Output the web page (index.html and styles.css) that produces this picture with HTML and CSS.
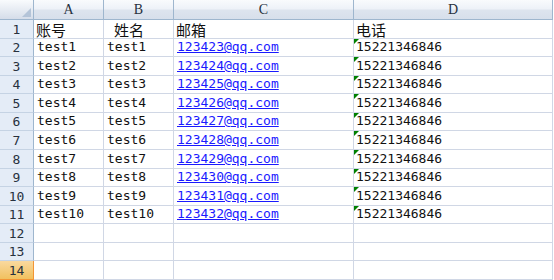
FILE: index.html
```html
<!DOCTYPE html>
<html>
<head>
<meta charset="utf-8">
<link rel="stylesheet" href="styles.css">
</head>
<body>
<div class="sheet">
  <div class="corner"><span class="corner-tri"></span></div>
  <div class="colhead">A</div>
  <div class="colhead">B</div>
  <div class="colhead">C</div>
  <div class="colhead">D</div>

  <div class="rowhead">1</div>
  <div class="cell cjk">账号</div>
  <div class="cell cjk"><span class="indent">姓名</span></div>
  <div class="cell cjk">邮箱</div>
  <div class="cell cjk">电话</div>

  <div class="rowhead">2</div><div class="cell">test1</div><div class="cell">test1</div><div class="cell"><a class="link">123423@qq.com</a></div><div class="cell num"><span class="flag"></span>15221346846</div>
  <div class="rowhead">3</div><div class="cell">test2</div><div class="cell">test2</div><div class="cell"><a class="link">123424@qq.com</a></div><div class="cell num"><span class="flag"></span>15221346846</div>
  <div class="rowhead">4</div><div class="cell">test3</div><div class="cell">test3</div><div class="cell"><a class="link">123425@qq.com</a></div><div class="cell num"><span class="flag"></span>15221346846</div>
  <div class="rowhead">5</div><div class="cell">test4</div><div class="cell">test4</div><div class="cell"><a class="link">123426@qq.com</a></div><div class="cell num"><span class="flag"></span>15221346846</div>
  <div class="rowhead">6</div><div class="cell">test5</div><div class="cell">test5</div><div class="cell"><a class="link">123427@qq.com</a></div><div class="cell num"><span class="flag"></span>15221346846</div>
  <div class="rowhead">7</div><div class="cell">test6</div><div class="cell">test6</div><div class="cell"><a class="link">123428@qq.com</a></div><div class="cell num"><span class="flag"></span>15221346846</div>
  <div class="rowhead">8</div><div class="cell">test7</div><div class="cell">test7</div><div class="cell"><a class="link">123429@qq.com</a></div><div class="cell num"><span class="flag"></span>15221346846</div>
  <div class="rowhead">9</div><div class="cell">test8</div><div class="cell">test8</div><div class="cell"><a class="link">123430@qq.com</a></div><div class="cell num"><span class="flag"></span>15221346846</div>
  <div class="rowhead">10</div><div class="cell">test9</div><div class="cell">test9</div><div class="cell"><a class="link">123431@qq.com</a></div><div class="cell num"><span class="flag"></span>15221346846</div>
  <div class="rowhead">11</div><div class="cell">test10</div><div class="cell">test10</div><div class="cell"><a class="link">123432@qq.com</a></div><div class="cell num"><span class="flag"></span>15221346846</div>
  <div class="rowhead">12</div><div class="cell"></div><div class="cell"></div><div class="cell"></div><div class="cell"></div>
  <div class="rowhead">13</div><div class="cell"></div><div class="cell"></div><div class="cell"></div><div class="cell"></div>
  <div class="rowhead active">14</div><div class="cell"></div><div class="cell"></div><div class="cell"></div><div class="cell"></div>
</div>
</body>
</html>
```

FILE: styles.css
```css
html, body {
  margin: 0;
  padding: 0;
  background: #ffffff;
  overflow: hidden;
}

.sheet {
  display: grid;
  grid-template-columns: 34px 70px 70px 180px 199px;
  grid-template-rows: 20px repeat(14, 18.57px);
  width: 553px;
  font-family: "DejaVu Sans Mono", "Liberation Mono", monospace;
  font-size: 13px;
  color: #111;
}

.corner {
  position: relative;
  box-sizing: border-box;
  background: linear-gradient(#f9fbfd, #d5dde9);
  border-right: 1px solid #9eb6ce;
  border-bottom: 1px solid #9eb6ce;
}

.corner-tri {
  position: absolute;
  right: 2px;
  bottom: 2px;
  width: 0;
  height: 0;
  border-left: 9px solid transparent;
  border-bottom: 9px solid #b4c4d8;
}

.colhead {
  box-sizing: border-box;
  background: linear-gradient(#f9fbfd 0%, #eef2f8 45%, #dde4ee 55%, #d7dfeb 100%);
  border-right: 1px solid #9eb6ce;
  border-bottom: 1px solid #9eb6ce;
  display: flex;
  align-items: center;
  justify-content: center;
  font-family: "Liberation Serif", serif;
  font-size: 14px;
  color: #27313e;
  padding-top: 1px;
}

.rowhead {
  box-sizing: border-box;
  background: #e4ecf7;
  border-right: 1px solid #9eb6ce;
  border-bottom: 1px solid #c5d3e4;
  display: flex;
  align-items: flex-end;
  justify-content: center;
  padding-bottom: 1px;
  font-family: "DejaVu Sans Mono", monospace;
  font-size: 13px;
  color: #27313e;
}

.rowhead.active {
  background: linear-gradient(#f9d99f, #f1c15f);
  border-right: 1px solid #f29536;
  border-bottom: 1px solid #f29536;
}

.cell {
  position: relative;
  box-sizing: border-box;
  border-right: 1px solid #d0d7e5;
  border-bottom: 1px solid #d0d7e5;
  display: flex;
  align-items: flex-end;
  padding: 0 0 1px 3px;
  white-space: nowrap;
  line-height: 16px;
}

.cell.cjk {
  font-family: "Noto Sans CJK SC", sans-serif;
  font-size: 15px;
  line-height: 17px;
  padding-left: 2px;
  padding-bottom: 0;
}

.indent {
  margin-left: 8px;
}

.cell.num {
  padding-left: 2px;
}

.link {
  color: #1a1aff;
  text-decoration: underline;
}

.flag {
  position: absolute;
  left: 0;
  top: 0;
  width: 0;
  height: 0;
  border-top: 5px solid #008000;
  border-right: 5px solid transparent;
}
```
